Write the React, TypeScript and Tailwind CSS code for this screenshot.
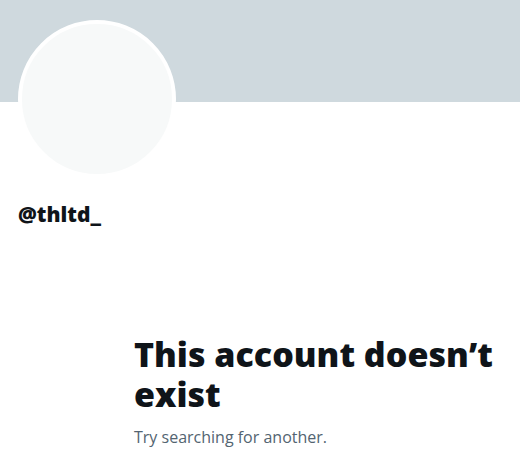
import React from 'react';

export default function App() {
    return (
        <div className="w-[520px] h-[456px] bg-white overflow-hidden font-['Open_Sans','Noto_Sans',sans-serif]">
            <div className="h-[102px] bg-[#cfd9de]" />
            <div className="px-[18px]">
                <div className="-mt-[82px] w-[158px] h-[158px] rounded-full border-4 border-white bg-[#f7f9f9]" />
                <div className="mt-[24px] text-[21px] leading-[25px] font-extrabold text-[#0f1419]">@thltd_</div>
            </div>
            <div className="pl-[134px] pr-[16px] mt-[107px]">
                <h1 className="text-[34px] leading-[40px] font-extrabold text-[#0f1419]">This account doesn’t exist</h1>
                <p className="mt-[12px] text-[16px] leading-[22px] text-[#536471]">Try searching for another.</p>
            </div>
        </div>
    );
}
